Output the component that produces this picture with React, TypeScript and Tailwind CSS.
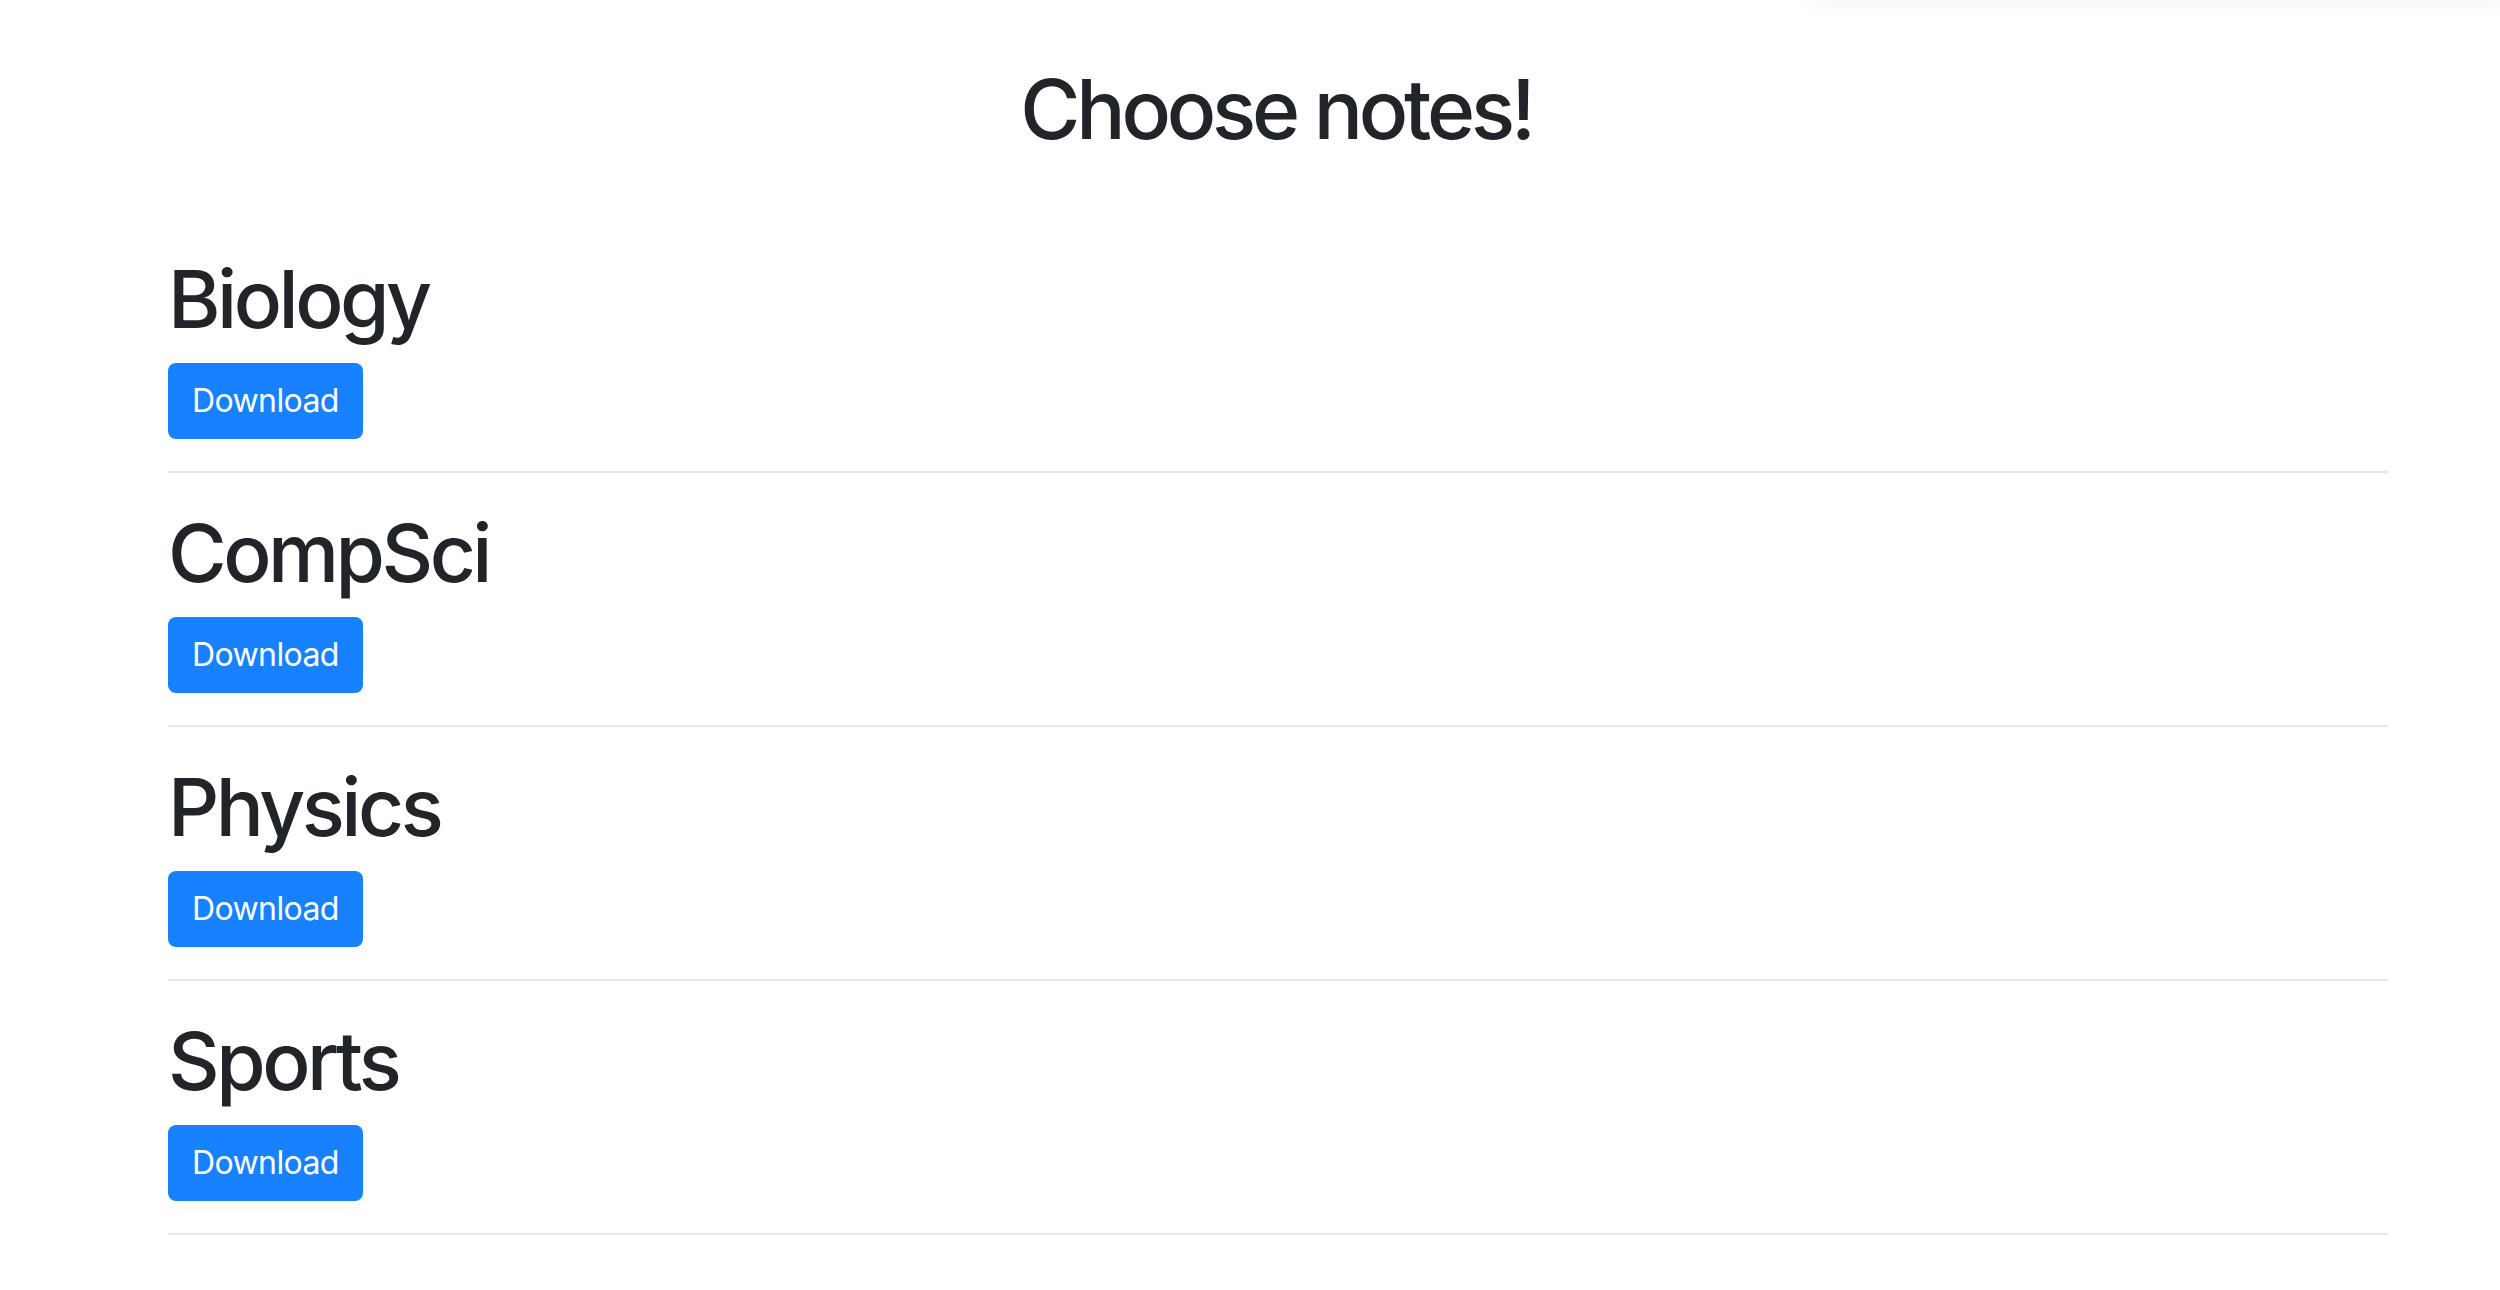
import React from 'react';

const subjects = ['Biology', 'CompSci', 'Physics', 'Sports'];

const NoteRow: React.FC<{ name: string }> = ({ name }) => (
  <li>
    <h2 className="text-[80px] leading-[96px] font-medium tracking-[-3.5px] mb-[16px]">{name}</h2>
    <button
      type="button"
      className="h-[76px] px-[24px] rounded-[8px] bg-[#1781ff] text-white text-[32px] leading-[48px] tracking-[-0.6px]"
    >
      Download
    </button>
    <hr className="mt-[32px] mb-[32px] border-0 border-t-2 border-[#e6e6e6]" />
  </li>
);

export default function App() {
  return (
    <div
      className="relative min-h-screen bg-white text-[#212529] overflow-hidden"
      style={{ fontFamily: 'Inter, "Noto Sans", sans-serif' }}
    >
      {/* faint shadow of something sitting above the viewport */}
      <div className="absolute -top-[40px] left-[1800px] -right-[20px] h-[40px] rounded-b-[30px] shadow-[0_4px_22px_rgba(0,0,0,0.045)] bg-white" />

      <h1 className="pt-[61px] pl-[52px] text-center text-[82px] leading-[98px] font-medium tracking-[-4.2px] mb-[92px]">
        Choose notes!
      </h1>

      <ul className="pl-[168px] pr-[112px]">
        {subjects.map((s) => (
          <NoteRow key={s} name={s} />
        ))}
      </ul>
    </div>
  );
}
